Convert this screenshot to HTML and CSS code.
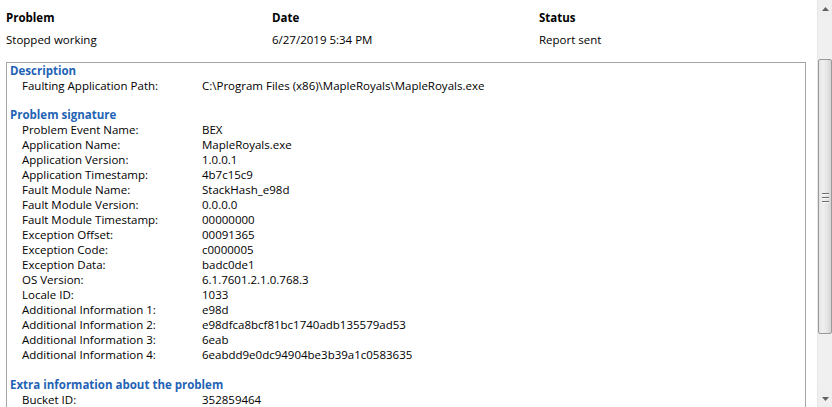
FILE: index.html
```html
<!DOCTYPE html>
<html>
<head>
<meta charset="utf-8">
<link rel="stylesheet" href="styles.css">
</head>
<body>
<div class="window">
  <div class="content">
    <div class="grid head">
      <div>Problem</div><div>Date</div><div>Status</div>
    </div>
    <div class="grid rowline">
      <div>Stopped working</div><div>6/27/2019 5:34 PM</div><div>Report sent</div>
    </div>
    <div class="details">
      <div class="section">
        <div class="sec-title">Description</div>
        <div class="kv"><span>Faulting Application Path:</span><span>C:\Program Files (x86)\MapleRoyals\MapleRoyals.exe</span></div>
      </div>
      <div class="section">
        <div class="sec-title">Problem signature</div>
        <div class="kv"><span>Problem Event Name:</span><span>BEX</span></div>
        <div class="kv"><span>Application Name:</span><span>MapleRoyals.exe</span></div>
        <div class="kv"><span>Application Version:</span><span>1.0.0.1</span></div>
        <div class="kv"><span>Application Timestamp:</span><span>4b7c15c9</span></div>
        <div class="kv"><span>Fault Module Name:</span><span>StackHash_e98d</span></div>
        <div class="kv"><span>Fault Module Version:</span><span>0.0.0.0</span></div>
        <div class="kv"><span>Fault Module Timestamp:</span><span>00000000</span></div>
        <div class="kv"><span>Exception Offset:</span><span>00091365</span></div>
        <div class="kv"><span>Exception Code:</span><span>c0000005</span></div>
        <div class="kv"><span>Exception Data:</span><span>badc0de1</span></div>
        <div class="kv"><span>OS Version:</span><span>6.1.7601.2.1.0.768.3</span></div>
        <div class="kv"><span>Locale ID:</span><span>1033</span></div>
        <div class="kv"><span>Additional Information 1:</span><span>e98d</span></div>
        <div class="kv"><span>Additional Information 2:</span><span>e98dfca8bcf81bc1740adb135579ad53</span></div>
        <div class="kv"><span>Additional Information 3:</span><span>6eab</span></div>
        <div class="kv"><span>Additional Information 4:</span><span>6eabdd9e0dc94904be3b39a1c0583635</span></div>
      </div>
      <div class="section">
        <div class="sec-title">Extra information about the problem</div>
        <div class="kv"><span>Bucket ID:</span><span>352859464</span></div>
      </div>
    </div>
  </div>
  <div class="scrollbar">
    <div class="sb-btn"><svg width="7" height="4" viewBox="0 0 7 4"><path d="M0 4 L3.5 0 L7 4 Z" fill="#606060"/></svg></div>
    <div class="sb-gap-top"></div>
    <div class="sb-thumb">
      <div class="grip"><i></i><i></i><i></i></div>
    </div>
    <div class="sb-gap-bottom"></div>
    <div class="sb-btn down"><svg width="7" height="4" viewBox="0 0 7 4"><path d="M0 0 L7 0 L3.5 4 Z" fill="#606060"/></svg></div>
  </div>
</div>
</body>
</html>
```

FILE: styles.css
```css
html, body {
  margin: 0;
  padding: 0;
  background: #ffffff;
}
body {
  font-family: "Open Sans", "Noto Sans", "DejaVu Sans", sans-serif;
  font-size: 11.5px;
  color: #000;
  overflow: hidden;
}
.window {
  display: flex;
  width: 832px;
  height: 407px;
  overflow: hidden;
}
.content {
  width: 817px;
  flex: none;
  padding-top: 10px;
  box-sizing: border-box;
}
.grid {
  display: grid;
  grid-template-columns: 266px 267px 1fr;
  padding-left: 6px;
  line-height: 15px;
  height: 15px;
  white-space: nowrap;
}
.head {
  font-weight: 700;
}
.rowline {
  margin-top: 7px;
}
.details {
  margin: 15px 11px 0 6px;
  border: 1px solid #a5a5a5;
  border-bottom: none;
  padding: 0 0 0 3px;
  height: 400px;
}
.section + .section {
  margin-top: 14px;
}
.section + .section + .section {
  margin-top: 15px;
}
.sec-title {
  color: #1f63b5;
  font-weight: 700;
  line-height: 15px;
  height: 15px;
  white-space: nowrap;
}
.kv {
  display: grid;
  grid-template-columns: 180px 1fr;
  padding-left: 12px;
  line-height: 15px;
  height: 15px;
  white-space: nowrap;
}
.scrollbar {
  width: 15px;
  flex: none;
  display: flex;
  flex-direction: column;
  background: #f0f0f0;
  border-left: 1px solid #e6e6e6;
  box-sizing: border-box;
}
.sb-btn {
  height: 17px;
  display: flex;
  align-items: center;
  justify-content: center;
  background: #efefef;
}
.sb-gap-top {
  height: 42px;
  background: #f0f0f0;
}
.sb-thumb {
  height: 275px;
  box-sizing: border-box;
  border: 1px solid #9a9a9a;
  border-radius: 2px;
  background: linear-gradient(to right, #e4e4e4 0%, #efefef 30%, #e8e8e8 60%, #d4d4d4 100%);
  display: flex;
  align-items: center;
  justify-content: center;
}
.grip {
  display: flex;
  flex-direction: column;
  gap: 2px;
  margin-top: 2px;
}
.grip i {
  display: block;
  width: 7px;
  height: 1px;
  background: #6e6e6e;
  border-bottom: 1px solid #f8f8f8;
}
.sb-gap-bottom {
  flex: 1;
  background: #f0f0f0;
}
```
